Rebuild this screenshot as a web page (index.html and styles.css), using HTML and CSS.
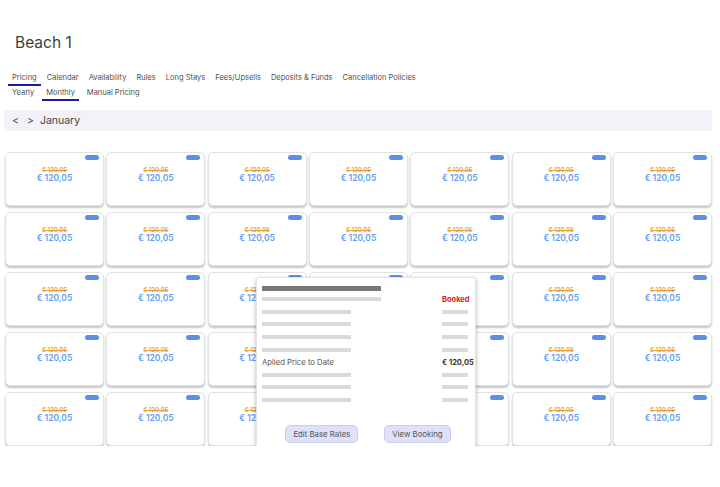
FILE: index.html
```html
<!DOCTYPE html>
<html lang="en">
<head>
    <meta charset="UTF-8">
    <meta name="viewport" content="width=device-width, initial-scale=1.0">
    <title>Beach 1 - Pricing</title>
    <link rel="stylesheet" href="styles.css">
</head>
<body>
    <div class="page">
        <h1 class="title">Beach 1</h1>

        <!-- Main tabs -->
        <nav class="tabs">
            <a class="tab active">Pricing</a>
            <a class="tab">Calendar</a>
            <a class="tab">Availability</a>
            <a class="tab">Rules</a>
            <a class="tab">Long Stays</a>
            <a class="tab">Fees/Upsells</a>
            <a class="tab">Deposits &amp; Funds</a>
            <a class="tab">Cancellation Policies</a>
        </nav>

        <!-- Sub tabs -->
        <nav class="tabs sub-tabs">
            <a class="tab">Yearly</a>
            <a class="tab active">Monthly</a>
            <a class="tab">Manual Pricing</a>
        </nav>

        <div class="month-bar">
            <span class="arrow">&lt;</span>
            <span class="arrow">&gt;</span>
            <span class="month">January</span>
        </div>

        <div class="calendar-wrap">
            <div class="calendar" id="calendar"></div>

            <!-- Booking popup -->
            <div class="popup">
                <div class="bar dark"></div>
                <div class="popup-rows">
                    <div class="bar wide"></div><span class="booked">Booked</span>
                    <div class="bar"></div><div class="bar small"></div>
                    <div class="bar"></div><div class="bar small"></div>
                    <div class="bar"></div><div class="bar small"></div>
                    <div class="bar"></div><div class="bar small"></div>
                    <span class="label">Aplied Price to Date</span><span class="amount">€ 120,05</span>
                    <div class="bar"></div><div class="bar small"></div>
                    <div class="bar"></div><div class="bar small"></div>
                    <div class="bar"></div><div class="bar small"></div>
                </div>
                <div class="popup-actions">
                    <button class="btn">Edit Base Rates</button>
                    <button class="btn">View Booking</button>
                </div>
            </div>
        </div>
    </div>

    <script>
        // Build 5 weeks x 7 days of day cards
        var calendar = document.getElementById("calendar");
        for (var i = 0; i < 35; i++) {
            var row = Math.floor(i / 7);
            var col = i % 7;
            var card = document.createElement("div");
            card.className = "day";
            // prices of days fully hidden under the popup are not drawn
            if (row >= 2 && (col == 3 || col == 4)) {
                card.className += " covered";
            }
            card.innerHTML =
                '<span class="badge"></span>' +
                '<span class="old-price">€ 120,05</span>' +
                '<span class="price">€ 120,05</span>';
            calendar.appendChild(card);
        }
    </script>
</body>
</html>
```

FILE: styles.css
```css
body {
    margin: 0;
    font-family: Inter, "Noto Sans", sans-serif;
    color: #444;
    background: #fff;
}

.page {
    padding: 0 8px 0 4px;
}

.title {
    margin: 0;
    padding: 33px 0 0 11px;
    font-size: 15.5px;
    font-weight: 400;
    line-height: 20px;
    color: #404040;
}

/* Tabs */
.tabs {
    display: flex;
    gap: 2px;
    margin-top: 19px;
    padding-left: 4px;
}

.tab {
    padding: 0 4px;
    font-size: 7.5px;
    line-height: 12px;
    color: #505050;
    border-bottom: 2px solid transparent;
}

.tab.active {
    border-bottom-color: #1e1a9c;
}

.sub-tabs {
    margin-top: 1px;
    gap: 4px;
}

.month-bar {
    display: flex;
    align-items: center;
    gap: 8px;
    height: 21px;
    margin-top: 9px;
    padding-left: 8px;
    background-color: #f3f2f8;
    font-size: 10.5px;
    color: #444;
}

.month-bar .month {
    margin-left: -2px;
}

/* Calendar grid */
.calendar-wrap {
    position: relative;
    margin-top: 21px;
    padding-left: 1px;
}

.calendar {
    display: grid;
    grid-template-columns: repeat(7, 1fr);
    column-gap: 2.4px;
    row-gap: 6px;
}

.day {
    position: relative;
    display: flex;
    flex-direction: column;
    align-items: center;
    height: 54px;
    padding-top: 13px;
    box-sizing: border-box;
    background: #fff;
    border: 1px solid #e2e2e2;
    border-radius: 5px;
    box-shadow: 0 2px 2px rgba(0, 0, 0, 0.22);
}

.day.covered .old-price,
.day.covered .price {
    visibility: hidden;
}

.badge {
    position: absolute;
    top: 2px;
    right: 4px;
    width: 14px;
    height: 5px;
    border-radius: 3px;
    background-color: #5b8fe8;
}

.old-price {
    font-size: 6px;
    font-weight: 600;
    line-height: 8px;
    color: #e9a23b;
    text-decoration: line-through;
}

.price {
    font-size: 8.5px;
    font-weight: 600;
    line-height: 9px;
    color: #5e9cf0;
}

/* Popup */
.popup {
    position: absolute;
    left: 252px;
    top: 125px;
    width: 220px;
    height: 176px;
    box-sizing: border-box;
    padding: 8px 4px 0 5px;
    background: #fff;
    border: 1px solid #e4e4e4;
    border-radius: 3px;
    box-shadow: 0 2px 4px rgba(0, 0, 0, 0.3);
}

.bar {
    width: 89px;
    height: 4px;
    background-color: #dadada;
}

.bar.dark {
    width: 119px;
    height: 4.5px;
    background-color: #787878;
}

.bar.wide {
    width: 119px;
}

.bar.small {
    width: 26px;
}

.popup-rows {
    display: grid;
    grid-template-columns: 180px 1fr;
    grid-auto-rows: 12.6px;
    align-items: center;
    margin-top: 2.5px;
    white-space: nowrap;
}

.booked {
    font-size: 7.5px;
    font-weight: 700;
    line-height: 9px;
    color: #e02020;
}

.label {
    font-size: 7.7px;
    line-height: 9px;
    color: #555;
}

.amount {
    font-size: 7.5px;
    font-weight: 700;
    line-height: 9px;
    color: #333;
}

.popup-actions {
    display: flex;
    justify-content: center;
    gap: 26px;
    margin-top: 18.5px;
    padding-left: 3px;
}

.btn {
    height: 18px;
    padding: 0 7px;
    font-family: Inter, "Noto Sans", sans-serif;
    font-size: 7.8px;
    color: #555;
    background-color: #dfe2f7;
    border: 1px solid #c8cdee;
    border-radius: 5px;
}
```
